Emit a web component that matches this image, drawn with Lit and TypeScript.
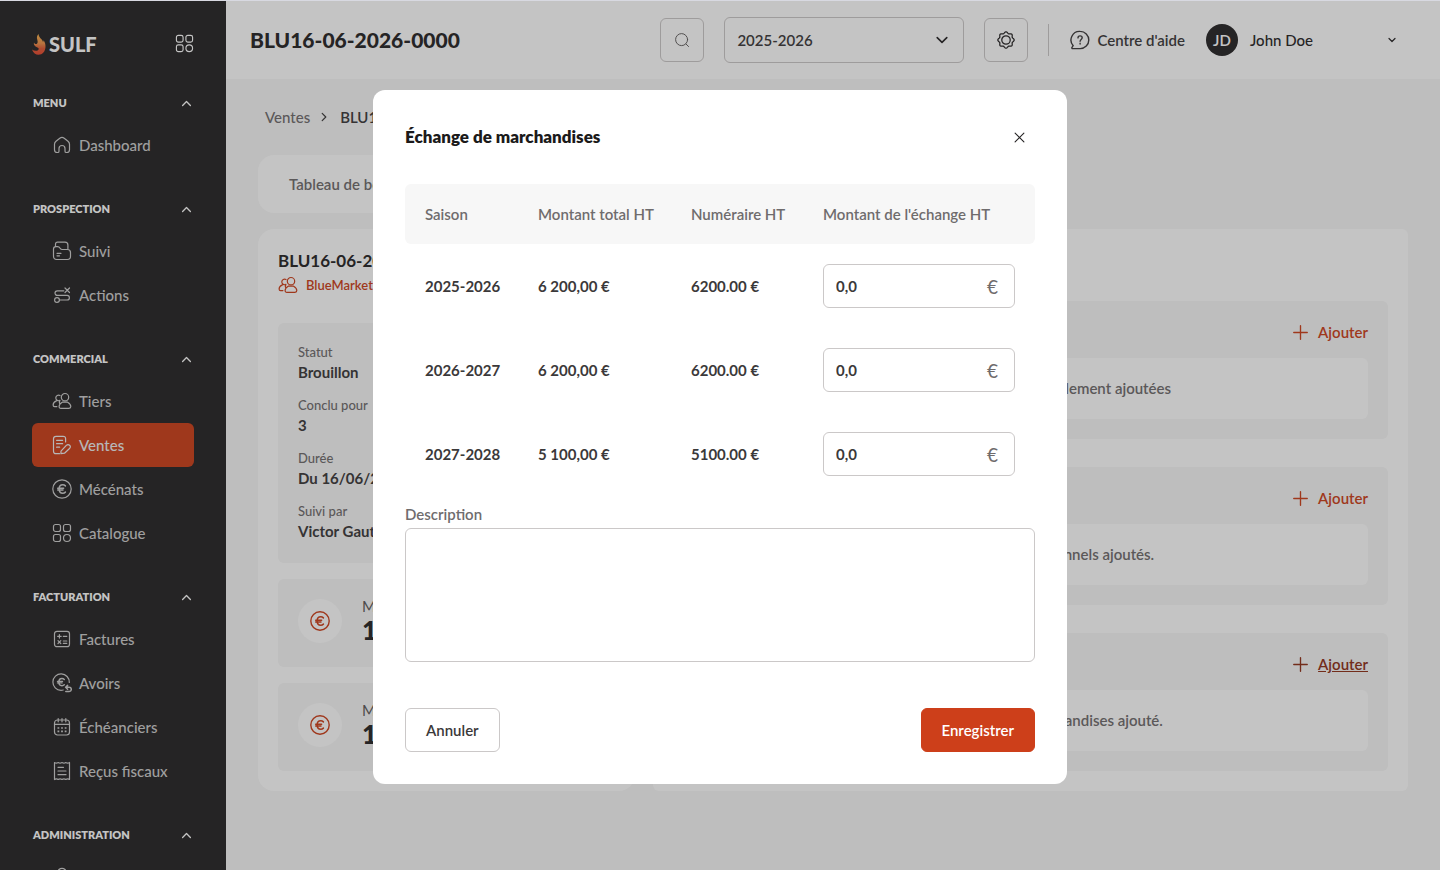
import { LitElement, html, css, svg, TemplateResult } from "lit";
import { customElement, property, state } from "lit/decorators.js";
import { classMap } from "lit/directives/class-map.js";

// Outline of a cog: a circle whose radius swells eight times per turn.
const cog = Array.from({ length: 96 }, (_, i) => {
  const a = (i / 96) * Math.PI * 2;
  const r = 8.3 + 0.8 * Math.cos(8 * a);
  return `${i ? "L" : "M"}${(10 + r * Math.sin(a)).toFixed(2)} ${(10 - r * Math.cos(a)).toFixed(2)}`;
}).join("") + "z";

const icons: Record<string, TemplateResult> = {
  home: svg`<path d="M2.5 9.3c0-1.300.5-2.200 1.500-3l3.800-3.100c1.500-1.100 2.900-1.100 4.400 0L16 6.300c1 .8 1.500 1.700 1.500 3v5.400c0 1.700-1.100 2.800-2.800 2.800h-.4c-.8 0-1.300-.5-1.300-1.300V13.500a3 3 0 0 0-6 0v2.700c0 .8-.5 1.300-1.300 1.300h-.4c-1.700 0-2.800-1.100-2.800-2.800z"/>`,
  folder: svg`<path d="M3.5 5.5V3.200c0-1.200.8-2 2-2h7.500c1.700 0 2.900 1.200 2.900 2.900v3.400M1.500 8c0-1.500 1-2.400 2.400-2.400h1.800c1 0 1.700.5 2.100 1.200l.5.700c.5.800 1 1 1.900 1h5.200c1.900 0 3.100 1.100 3.100 3v3.800c0 1.900-1.200 3.200-3.100 3.200H4.600c-1.900 0-3.100-1.300-3.100-3.200zM5 12.300h4M5 14.800h2.500"/>`,
  route: svg`<circle cx="5" cy="15" r="2.4"/><path d="M7.500 15h7.600a2.300 2.300 0 0 0 0-4.600H5.300a2.300 2.300 0 0 1 0-4.600h6.500M13 3l4.500 4.500M17.500 3 13 7.500"/>`,
  users: svg`<circle cx="13" cy="6.200" r="3.700"/><path d="M10.200 11.200h5.400c1.900 1 3.200 2.700 3.200 4.400 0 1.100-.7 1.700-1.800 1.700H8.900c-1.100 0-1.800-.6-1.800-1.700 0-1.700 1.200-3.400 3.100-4.400zM8 4.500a2.800 2.800 0 1 0-.1 4.900M7.600 12.300c-.6-.9-.3-1.800.4-2.700M4.400 9.900c-2 .8-3.300 2.400-3.300 4.100 0 1 .5 1.600 1.500 1.600h2.300"/>`,
  contract: svg`<path d="M13.600 7V3.800c0-1.600-.9-2.500-2.500-2.500H4c-1.600 0-2.500.9-2.500 2.500v12.400c0 1.600.9 2.500 2.500 2.500h3.500M4.600 5.300h6M4.600 8.700h6M4.600 12.200h3M9 16.200l5.300-5.800c1.200-1.200 2.200-1.200 3.300-.2s1 2.100-.1 3.300l-5 4.700-3.600.5z"/>`,
  euro: svg`<circle cx="10" cy="10" r="9.200"/><path stroke-width="1.500" d="M13.400 6.900c-.7-.7-1.600-1.100-2.600-1.100-2.200 0-3.700 1.800-3.700 4.200s1.500 4.200 3.700 4.200c1 0 1.900-.4 2.600-1.100M5.700 9.200h5.900M5.700 11h5.300"/>`,
  grid: svg`<rect x="1.500" y="1.500" width="7" height="7" rx="2"/><rect x="11.500" y="1.500" width="7" height="7" rx="2"/><rect x="1.500" y="11.500" width="7" height="7" rx="2"/><circle cx="15" cy="15" r="3.500"/>`,
  invoice: svg`<rect x="2.500" y="2.300" width="15" height="15.400" rx="2.500"/><path d="M5.600 7.300h3.600M7.400 5.500v3.600M11.300 7.300h3.500M6 11.700l2.800 2.800M8.800 11.700 6 14.500M11.300 12h3.500M11.300 14.300h3.500"/>`,
  credit: svg`<path d="M17.300 9.400A8.200 8.200 0 1 0 9 17.300c.8 0 1.500-.1 2.200-.3"/><path stroke-width="1.400" d="M12.300 6.400c-.6-.6-1.400-.9-2.300-.9-1.900 0-3.200 1.500-3.200 3.600s1.300 3.600 3.200 3.600c.9 0 1.700-.3 2.300-.9M5.500 8.400h5M5.500 9.900h4.600"/><path stroke-width="1.500" d="m15.600 12.400-2 1.900 2 1.900M13.900 14.300h3.300a2.100 2.100 0 0 1 0 4.200h-3.400"/>`,
  calendar: svg`<rect x="2.500" y="3" width="15" height="15" rx="3"/><path d="M2.500 7.400h15M6.200 1.600v3.200M10 1.600v3.200M13.800 1.600v3.200"/><path stroke-width="1.700" stroke-linecap="butt" d="M5.500 11h1.800M9.100 11h1.800M12.700 11h1.800M5.500 14.300h1.800M9.100 14.300h1.800M12.700 14.300h1.800"/>`,
  receipt: svg`<path d="M2.500 1.500c1.300.9 2.400.9 3.700 0 1.300.9 2.500.9 3.800 0 1.300.9 2.500.9 3.800 0 1.300.9 2.400.9 3.700 0v17c-1.300-.9-2.400-.9-3.700 0-1.300-.9-2.500-.9-3.800 0-1.300-.9-2.500-.9-3.800 0-1.300-.9-2.400-.9-3.700 0zM6 6.300h5.500M6 10h8M6 13.700h8"/>`,
  user: svg`<circle cx="10" cy="5.500" r="4.200"/><path d="M3 18c0-3.500 3-6 7-6s7 2.500 7 6z"/>`,
  search: svg`<circle cx="9.500" cy="9.500" r="7.500"/><path d="m15 15 3.200 3.200"/>`,
  gear: svg`<circle cx="10" cy="10" r="4.700"/><path d=${cog}/>`,
  help: svg`<path d="M10.200 1.400a8.600 8.600 0 1 1 0 17.200H2.700c-.8 0-1.100-.8-.6-1.400l1.100-1.500A8.600 8.600 0 0 1 10.200 1.400z"/><path d="M8 7.900c0-1.200.9-2 2.100-2s2.100.8 2.100 1.900c0 1.600-2.100 1.700-2.100 3.400M10.100 13.300v.7"/>`,
  up: svg`<path d="m4 13 6-6 6 6"/>`,
  down: svg`<path d="m4 7 6 6 6-6"/>`,
  right: svg`<path d="m7 4 6 6-6 6"/>`,
  close: svg`<path d="m2 2 16 16M18 2 2 18"/>`,
  plus: svg`<path d="M10 1v18M1 10h18"/>`,
};

const icon = (name: string, size: number, stroke = 1.2) => html`<svg
  width=${size} height=${size} viewBox="0 0 20 20" fill="none" stroke="currentColor"
  stroke-width=${stroke} stroke-linecap="round" stroke-linejoin="round" aria-hidden="true">${icons[name]}</svg>`;

const base = css`
  * { box-sizing: border-box; }
  svg { display: block; flex: none; }
  a { color: inherit; text-decoration: none; }
  h1, h2, p, dl, dt, dd, ul { margin: 0; padding: 0; }
  ul { list-style: none; }
  button, input, select, textarea { font: inherit; color: inherit; margin: 0; }
  button { background: none; border: 0; padding: 0; cursor: pointer; }
`;

interface NavGroup { title: string; items: [string, string][]; }

const groups: NavGroup[] = [
  { title: "MENU", items: [["home", "Dashboard"]] },
  { title: "PROSPECTION", items: [["folder", "Suivi"], ["route", "Actions"]] },
  { title: "COMMERCIAL", items: [["users", "Tiers"], ["contract", "Ventes"], ["euro", "Mécénats"], ["grid", "Catalogue"]] },
  { title: "FACTURATION", items: [["invoice", "Factures"], ["credit", "Avoirs"], ["calendar", "Échéanciers"], ["receipt", "Reçus fiscaux"]] },
  { title: "ADMINISTRATION", items: [["user", "Utilisateurs"]] },
];

@customElement("app-sidebar")
class AppSidebar extends LitElement {
  @property() active = "";

  static styles = [base, css`
    :host { display: block; overflow: hidden; background: #262425; color: #fff; padding: 0 32px; }
    .brand { display: flex; align-items: center; justify-content: space-between; height: 82px; padding-top: 2px; }
    .logo { display: flex; align-items: center; gap: 3px; padding-top: 2px; font-size: 20px; font-weight: 900; line-height: 24px; }
    .heading { display: flex; align-items: center; justify-content: space-between; width: 100%; height: 40px;
      padding: 0 1px; font-size: 11px; font-weight: 800; }
    .group { margin-bottom: 22px; }
    .item { display: flex; align-items: center; gap: 7px; height: 44px; padding: 0 20px; border-radius: 6px;
      color: #cdcdcd; font-weight: 500; white-space: nowrap; }
    .item.active { background: #cd3f1a; color: #eee; }
  `];

  render() {
    return html`
      <div class="brand">
        <a class="logo" href="#">
          <svg width="14" height="21" viewBox="0 0 14 21" aria-hidden="true">
            <defs><linearGradient id="flame" x1="0" y1="0" x2="0" y2="1">
              <stop offset="0" stop-color="#f6b04c"/><stop offset=".45" stop-color="#f0924a"/>
              <stop offset=".7" stop-color="#e25a35"/><stop offset="1" stop-color="#e8472f"/>
            </linearGradient></defs>
            <path fill="url(#flame)" d="M6.500 0c.3 2.500 1.500 3.700 3 5.300.7.800 1.300 1.700 1.500 2.700.4-.5.600-1 .6-1.700 1.300 1.800 2 4.200 1.900 6.700-.2 4.500-3 7.700-7 7.700-2.800 0-5.300-1.700-6.500-5.200 2 1.400 4.500 1.700 5.900.8 1.300-.8 1-2.200-.5-2.800C2.600 12.300 1.300 10.700 2 8.500 2.600 10 4 10.500 5 9.700 6.800 8.300 4.500 5.200 5 2.800 5.200 1.700 5.800.7 6.500 0z"/>
          </svg>
          <span>SULF</span>
        </a>
        <button aria-label="Applications">${icon("grid", 19)}</button>
      </div>
      <nav>
        ${groups.map(g => html`
          <div class="group">
            <button class="heading"><span>${g.title}</span>${icon("up", 13, 2)}</button>
            <ul>${g.items.map(([name, label]) => html`
              <li><a href="#" class=${classMap({ item: true, active: label === this.active })}>${icon(name, 20)}<span>${label}</span></a></li>`)}
            </ul>
          </div>`)}
      </nav>`;
  }
}

@customElement("app-topbar")
class AppTopbar extends LitElement {
  @property() heading = "";

  static styles = [base, css`
    :host { display: flex; align-items: center; gap: 20px; height: 78px; padding: 0 43px 0 24px; background: #fff; color: #262425; }
    h1 { margin-right: auto; font-size: 21px; line-height: 28px; font-weight: 900; white-space: nowrap; }
    .square { display: grid; place-items: center; width: 44px; height: 44px; border: 1px solid #cbc8c8; border-radius: 6px; }
    .search { color: #5d5a5a; }
    .season { position: relative; width: 240px; }
    .season select { appearance: none; display: block; width: 100%; height: 46px; padding: 0 12px; border: 1px solid #cbc8c8;
      border-radius: 6px; background: none; font-weight: 600; color: #3b393a; }
    .season svg { position: absolute; right: 14px; top: 15px; pointer-events: none; }
    .account { display: flex; align-items: center; gap: 21px; }
    .divider { width: 1px; height: 32px; background: #cbc8c8; }
    .help { display: flex; align-items: center; gap: 7px; font-weight: 600; color: #3b393a; white-space: nowrap; }
    .user { display: flex; align-items: center; gap: 12px; width: 191px; font-weight: 500; text-align: left; }
    .user svg { margin-left: auto; }
    .avatar { display: grid; place-items: center; width: 32px; height: 32px; border-radius: 50%; background: #262425; color: #fff; font-weight: 600; }
  `];

  render() {
    return html`
      <h1>${this.heading}</h1>
      <button class="square search" aria-label="Rechercher">${icon("search", 16)}</button>
      <div class="season">
        <select aria-label="Saison"><option>2025-2026</option><option>2026-2027</option></select>
        ${icon("down", 16, 2)}
      </div>
      <button class="square" aria-label="Paramètres">${icon("gear", 18, 1.4)}</button>
      <div class="account">
        <span class="divider"></span>
        <a class="help" href="#">${icon("help", 20, 1.4)}<span>Centre d'aide</span></a>
        <button class="user"><span class="avatar">JD</span><span>John Doe</span>${icon("down", 10, 2.4)}</button>
      </div>`;
  }
}

@customElement("sale-page")
class SalePage extends LitElement {
  static styles = [base, css`
    :host { display: block; padding: 28px 32px; color: #262425; }
    .crumbs { display: flex; align-items: center; gap: 8px; padding: 0 7px; line-height: 20px; font-weight: 600; color: #3b393a; }
    .crumbs a { color: #6f6c6d; font-weight: 500; }
    .crumbs span { padding-left: 2px; }
    .card { background: #fff; border-radius: 16px; }
    .tabs { display: flex; align-items: center; width: fit-content; margin: 28px 0 16px; height: 58px; padding: 0 31px; font-weight: 600; color: #6f6c6d; }
    .columns { display: grid; grid-template-columns: 1fr 2fr; gap: 18px; }
    .panel { padding: 20px; }
    .right { border-radius: 6px; }
    .name { font-size: 17px; line-height: 24px; font-weight: 700; }
    .client { display: flex; align-items: center; gap: 8px; font-size: 13px; line-height: 24px; font-weight: 600; color: #cd3f1a; }
    .tile { background: #f7f7f7; border-radius: 6px; padding: 20px; }
    .info { display: grid; gap: 12px; margin-top: 26px; }
    .info dt { font-size: 13px; line-height: 18px; font-weight: 500; color: #6f6c6d; }
    .info dd { line-height: 23px; font-weight: 700; color: #3b393a; }
    .stat { display: flex; align-items: flex-start; gap: 20px; margin-top: 16px; }
    .disc { display: grid; place-items: center; width: 44px; height: 44px; border-radius: 50%; background: #fff; color: #cd3f1a; }
    .stat-label { line-height: 14px; color: #5d5a5a; }
    .stat-value { font-size: 26px; line-height: 34px; font-weight: 900; }
    .right .name { line-height: 52px; }
    .section + .section { margin-top: 28px; }
    .bar { display: flex; justify-content: space-between; line-height: 22px; font-weight: 600; }
    .add { display: flex; align-items: center; gap: 10px; color: #cd3f1a; }
    .add.hover { color: #8f2f17; }
    .add.hover span { text-decoration: underline; }
    .empty { margin-top: 15px; padding: 20px; border-radius: 6px; background: #fff; line-height: 21px; font-weight: 600; text-align: center; color: #6f6c6d; }
  `];

  render() {
    const info = [["Statut", "Brouillon"], ["Conclu pour", "3"], ["Durée", "Du 16/06/2026 au 30/06/2028"], ["Suivi par", "Victor Gautier"]];
    const stats = [["Montant total HT", "17 500,00 €"], ["Montant total TTC", "17 500,00 €"]];
    const sections: [string, string, boolean][] = [
      ["Conditions de règlement", "Aucunes conditions de règlement ajoutées", false],
      ["Éléments additionnels", "Aucun éléments additionnels ajoutés.", false],
      ["Échange de marchandises", "Aucun échange de marchandises ajouté.", true],
    ];
    return html`
      <nav class="crumbs"><a href="#">Ventes</a>${icon("right", 12, 2)}<span>BLU16-06-2026-0000</span></nav>
      <div class="card tabs"><a href="#">Tableau de bord</a></div>
      <div class="columns">
        <section class="card panel">
          <h2 class="name">BLU16-06-2026-0000</h2>
          <a class="client" href="#">${icon("users", 20)}<span>BlueMarket</span></a>
          <dl class="tile info">${info.map(([k, v]) => html`<div><dt>${k}</dt><dd>${v}</dd></div>`)}</dl>
          ${stats.map(([k, v]) => html`
            <div class="tile stat">
              <span class="disc">${icon("euro", 20, 1.4)}</span>
              <div><p class="stat-label">${k}</p><p class="stat-value">${v}</p></div>
            </div>`)}
        </section>
        <section class="card panel right">
          <h2 class="name">Détails</h2>
          ${sections.map(([title, text, hover]) => html`
            <div class="tile section">
              <div class="bar"><span>${title}</span>
                <a href="#" class=${classMap({ add: true, hover })}>${icon("plus", 15, 1.8)}<span>Ajouter</span></a></div>
              <p class="empty">${text}</p>
            </div>`)}
        </section>
      </div>`;
  }
}

@customElement("exchange-dialog")
class ExchangeDialog extends LitElement {
  @state() private rows = [
    ["2025-2026", "6 200,00 €", "6200.00 €"],
    ["2026-2027", "6 200,00 €", "6200.00 €"],
    ["2027-2028", "5 100,00 €", "5100.00 €"],
  ];

  static styles = [base, css`
    :host { display: block; width: 100%; max-width: 694px; }
    .box { padding: 32px; border-radius: 12px; background: #fff; color: #262425; }
    .top { display: flex; align-items: center; justify-content: space-between; height: 30px; margin-bottom: 32px; }
    h2 { font-size: 17px; line-height: 24px; font-weight: 800; color: #1b1a1a; }
    .close { padding: 10px; }
    table { width: 100%; border-spacing: 0; table-layout: fixed; }
    .c1 { width: 113px; } .c2 { width: 153px; } .c3 { width: 132px; }
    th { height: 60px; padding: 0 20px; background: #f7f7f7; font-weight: 600; text-align: left; color: #6f6c6d; white-space: nowrap; }
    th:first-child { border-radius: 6px 0 0 6px; }
    th:last-child { border-radius: 0 6px 6px 0; }
    td { padding: 20px; font-weight: 700; color: #3b393a; white-space: nowrap; }
    .amount { display: flex; align-items: center; height: 44px; padding: 0 16px 0 12px; border: 1px solid #cbc8c8; border-radius: 6px; }
    .amount input { flex: 1; min-width: 0; border: 0; padding: 0; outline: 0; background: none; font-weight: 700; }
    .unit { padding-top: 2px; font-size: 19px; font-weight: 400; color: #6f6c6d; }
    .desc-label { display: block; margin-top: 7px; line-height: 22px; font-weight: 600; color: #6f6c6d; }
    textarea { display: block; width: 100%; height: 134px; margin-top: 3px; padding: 12px; border: 1px solid #cbc8c8; border-radius: 6px; outline: 0; resize: none; }
    .actions { display: flex; justify-content: space-between; margin-top: 46px; }
    .btn { height: 44px; padding: 0 20px; border: 1px solid #cbc8c8; border-radius: 6px; font-weight: 600; color: #3b393a; }
    .primary { border-color: #cd3f1a; background: #cd3f1a; color: #fff; }
  `];

  render() {
    return html`
      <form class="box" role="dialog" aria-labelledby="title" @submit=${(e: Event) => e.preventDefault()}>
        <div class="top">
          <h2 id="title">Échange de marchandises</h2>
          <button class="close" type="button" aria-label="Fermer">${icon("close", 11, 2)}</button>
        </div>
        <table>
          <colgroup><col class="c1"><col class="c2"><col class="c3"><col></colgroup>
          <thead><tr><th>Saison</th><th>Montant total HT</th><th>Numéraire HT</th><th>Montant de l'échange HT</th></tr></thead>
          <tbody>${this.rows.map(([season, total, cash]) => html`
            <tr><td>${season}</td><td>${total}</td><td>${cash}</td>
              <td><label class="amount"><input aria-label="Montant de l'échange HT ${season}" .value=${"0,0"}><span class="unit">€</span></label></td></tr>`)}
          </tbody>
        </table>
        <label class="desc-label" for="description">Description</label>
        <textarea id="description"></textarea>
        <div class="actions">
          <button class="btn" type="button">Annuler</button>
          <button class="btn primary" type="submit">Enregistrer</button>
        </div>
      </form>`;
  }
}

@customElement("app-root")
class AppRoot extends LitElement {
  static styles = [base, css`
    :host { display: grid; grid-template-columns: 226px 1fr; height: 100vh; overflow: hidden; border-top: 1px solid #d8d9e1;
      box-sizing: border-box; background: #f7f7f7; font: 400 15px/20px Lato, "Open Sans", sans-serif; }
    main { min-width: 0; overflow: hidden; }
    app-sidebar { min-height: 0; }
    .overlay { position: fixed; inset: 1px 0 0; display: flex; justify-content: center; align-items: flex-start;
      padding: 89px 20px 20px; background: rgba(38, 36, 37, 0.27); }
  `];

  render() {
    return html`
      <app-sidebar active="Ventes"></app-sidebar>
      <main>
        <app-topbar heading="BLU16-06-2026-0000"></app-topbar>
        <sale-page></sale-page>
      </main>
      <div class="overlay"><exchange-dialog></exchange-dialog></div>`;
  }
}
